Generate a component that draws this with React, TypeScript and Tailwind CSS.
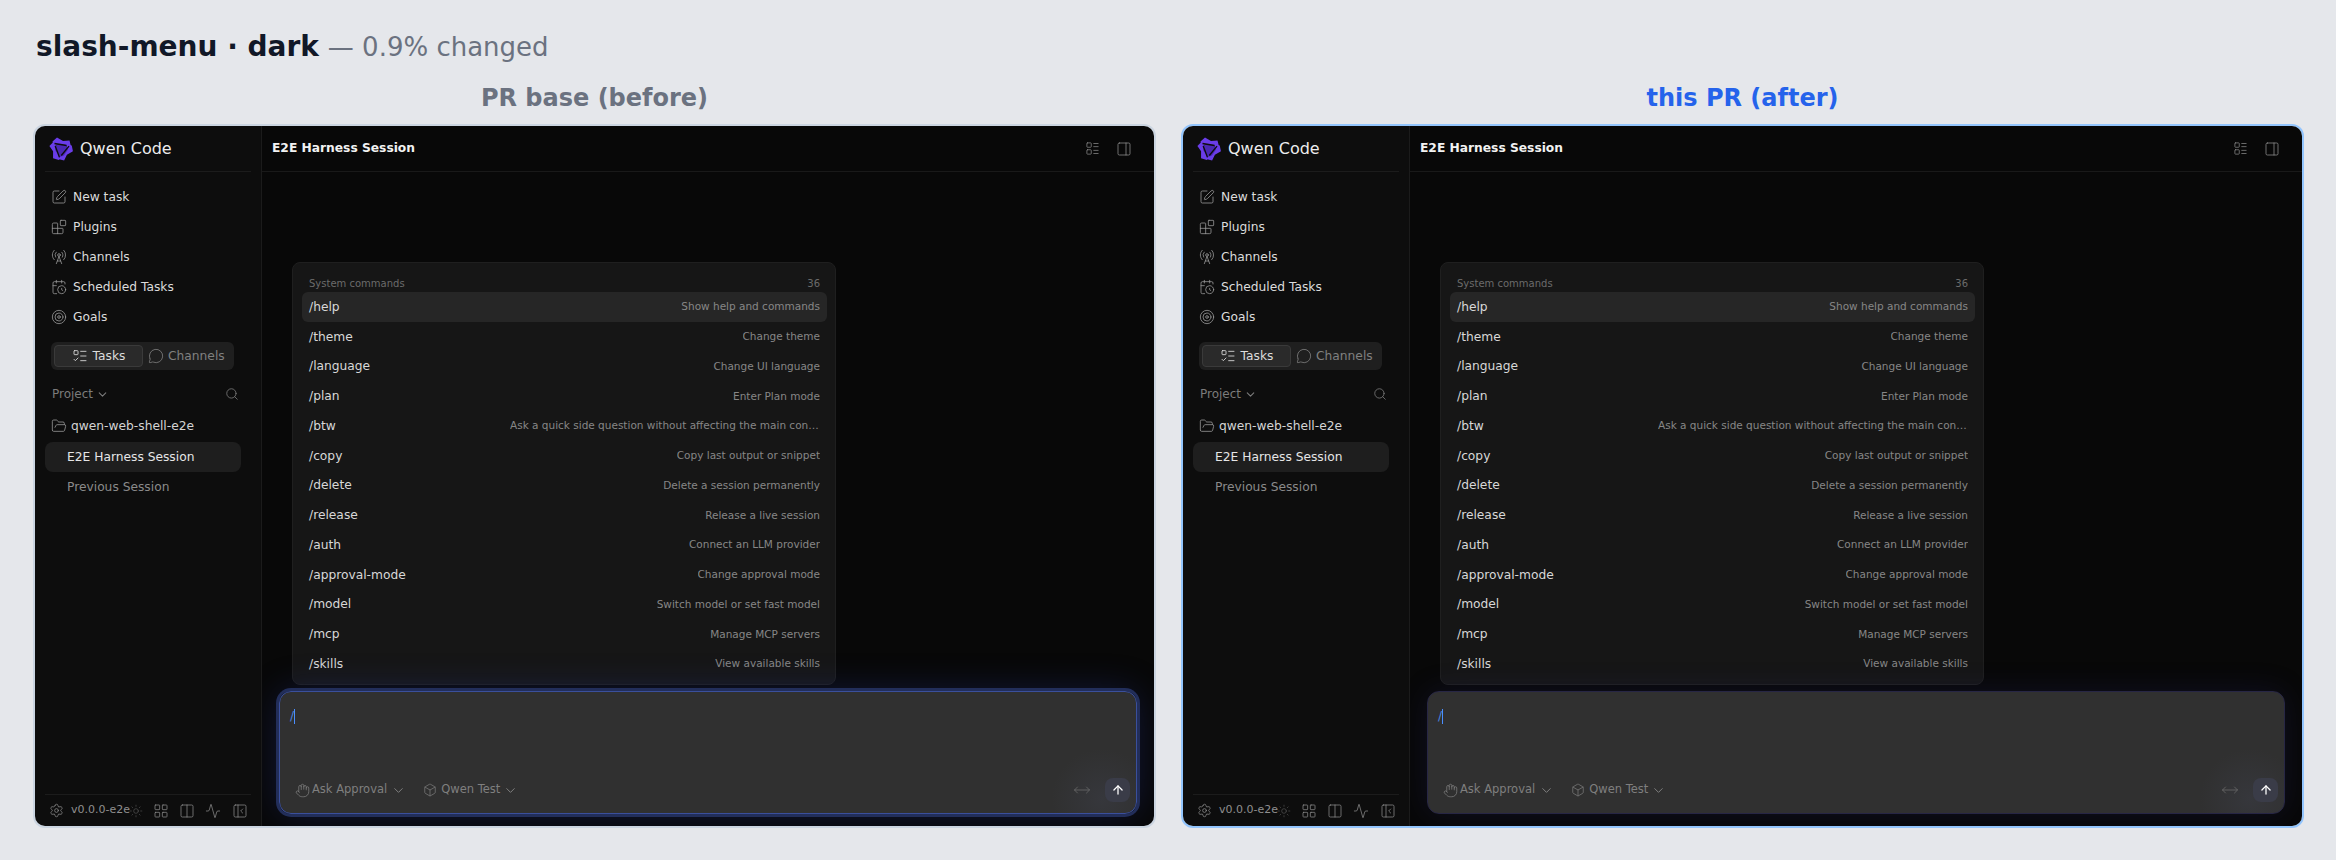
import React from 'react';
import {
  Activity,
  ArrowUp,
  Blocks,
  Box,
  CalendarClock,
  ChevronDown,
  Columns2,
  FolderOpen,
  Hand,
  LayoutGrid,
  LayoutList,
  ListTodo,
  MessageCircle,
  MoveHorizontal,
  PanelLeftClose,
  PanelRight,
  RadioTower,
  Search,
  Settings,
  SquarePen,
  Sun,
  Target,
} from 'lucide-react';

const NAV_ITEMS = [
  { label: 'New task', Icon: SquarePen },
  { label: 'Plugins', Icon: Blocks },
  { label: 'Channels', Icon: RadioTower },
  { label: 'Scheduled Tasks', Icon: CalendarClock },
  { label: 'Goals', Icon: Target },
];

const COMMANDS = [
  ['/help', 'Show help and commands'],
  ['/theme', 'Change theme'],
  ['/language', 'Change UI language'],
  ['/plan', 'Enter Plan mode'],
  ['/btw', 'Ask a quick side question without affecting the main conversation'],
  ['/copy', 'Copy last output or snippet'],
  ['/delete', 'Delete a session permanently'],
  ['/release', 'Release a live session'],
  ['/auth', 'Connect an LLM provider'],
  ['/approval-mode', 'Change approval mode'],
  ['/model', 'Switch model or set fast model'],
  ['/mcp', 'Manage MCP servers'],
  ['/skills', 'View available skills'],
];

function Logo() {
  return (
    <svg viewBox="0 0 24 24" className="h-[24px] w-[24px] shrink-0">
      {[0, 120, 240].map((angle) => (
        <path
          key={angle}
          transform={`rotate(${angle} 12 12)`}
          d="M8 .5 14 4l6.5-.5L22 9.5 17 8 8 7.5 5 10 3.5 4.5z"
          fill="#6a3de8"
        />
      ))}
      <path d="M7.5 7.5 17 8l2 4.5-4 6-4 1.5L6 13z" fill="#4a28b4" />
      {[0, 120, 240].map((angle) => (
        <path
          key={angle}
          transform={`rotate(${angle} 12 12)`}
          d="M5.5 6.5 17.5 8.5"
          stroke="#0d0d0d"
          strokeWidth="1.4"
          fill="none"
        />
      ))}
    </svg>
  );
}

function Sidebar() {
  return (
    <div className="flex h-full w-[227px] shrink-0 flex-col border-r border-[#1b1b1b] bg-[#0d0d0d]">
      <div className="mx-[10px] flex h-[46px] shrink-0 items-center gap-[7px] border-b border-[#1c1c1c] pl-[4px]">
        <Logo />
        <span className="text-[16px] text-[#ececec]">Qwen Code</span>
      </div>
      <div className="mt-[10px] flex flex-col pl-[16px]">
        {NAV_ITEMS.map(({ label, Icon }) => (
          <div key={label} className="flex h-[30px] items-center gap-[6px] text-[12.25px] text-[#dcdcdc]">
            <Icon size={16} strokeWidth={1.2} className="shrink-0 text-[#999999]" />
            {label}
          </div>
        ))}
      </div>
      <div className="mt-[10px] ml-[16px] flex h-[28px] w-[183px] items-center rounded-[6px] bg-[#1f1f1f] px-[3px] text-[12.25px]">
        <div className="flex h-[22px] w-[89px] items-center justify-center gap-[5px] rounded-[4px] border border-[#3a3a3a] bg-[#2a2a2a] text-[#dddddd]">
          <ListTodo size={16} strokeWidth={1.3} />
          Tasks
        </div>
        <div className="ml-[5px] flex items-center gap-[4px] text-[#808080]">
          <MessageCircle size={16} strokeWidth={1.2} />
          Channels
        </div>
      </div>
      <div className="mt-[14px] flex h-[20px] items-center pl-[17px] pr-[22px] text-[12px] text-[#7b7b7b]">
        Project
        <ChevronDown size={13} className="ml-[3px]" />
        <Search size={14} strokeWidth={1.4} className="ml-auto" />
      </div>
      <div className="mt-[12px] flex h-[20px] items-center gap-[4px] pl-[16px] text-[12.25px] text-[#d4d4d4]">
        <FolderOpen size={16} strokeWidth={1.2} className="text-[#999999]" />
        qwen-web-shell-e2e
      </div>
      <div className="mt-[6px] ml-[10px] flex h-[30px] w-[196px] items-center rounded-[8px] bg-[#1e1e1e] pl-[22px] text-[12.25px] text-[#e6e6e6]">
        E2E Harness Session
      </div>
      <div className="ml-[10px] flex h-[30px] items-center pl-[22px] text-[12.25px] text-[#8a8a8a]">
        Previous Session
      </div>
      <div className="mx-[10px] mt-auto flex h-[32px] items-center border-t border-[#1c1c1c] pl-[3.5px] text-[#8f8f8f]">
        <Settings size={15} strokeWidth={1.2} className="shrink-0" />
        <span className="ml-[7.5px] shrink-0 text-[11px]">v0.0.0-e2e</span>
        <Sun size={14} strokeWidth={0.9} className="-ml-[1.5px] shrink-0 text-[#666666]" />
        <LayoutGrid size={16} strokeWidth={1.1} className="ml-[10.5px] shrink-0" />
        <Columns2 size={16} strokeWidth={1.1} className="ml-[10px] shrink-0" />
        <Activity size={16} strokeWidth={1.1} className="ml-[10px] shrink-0" />
        <PanelLeftClose size={16} strokeWidth={1.1} className="ml-[11px] shrink-0" />
      </div>
    </div>
  );
}

function SlashMenu() {
  return (
    <div className="ml-[30px] w-[544px] rounded-[8px] border border-[#1f1f1f] bg-[#161616] pb-[5px] pt-[13px]">
      <div className="flex h-[14px] items-center justify-between pl-[16px] pr-[15px] text-[10px] text-[#6b6b6b]">
        <span>System commands</span>
        <span>36</span>
      </div>
      <div className="mt-[2px] flex flex-col pl-[9px] pr-[8px]">
        {COMMANDS.map(([name, desc], i) => (
          <div
            key={name}
            className={
              i === 0
                ? 'flex h-[29.75px] items-center justify-between gap-[16px] rounded-[6px] bg-[#262626] px-[7px]'
                : 'flex h-[29.75px] items-center justify-between gap-[16px] px-[7px]'
            }>
            <span className="shrink-0 text-[12.25px] text-[#d8d8d8]">{name}</span>
            <span className="max-w-[310px] truncate text-[10.5px] text-[#868686]">{desc}</span>
          </div>
        ))}
      </div>
    </div>
  );
}

function Composer({ focused }: { focused: boolean }) {
  return (
    <div
      className={
        focused
          ? 'mx-[17px] mb-[12px] mt-[6px] flex h-[123px] flex-col rounded-[12px] border border-[#3a4f9c] bg-[radial-gradient(circle_at_96%_88%,#36373c_0,#303030_50px)] shadow-[0_0_0_3px_#222e5a,0_0_36px_rgba(40,60,170,0.3)]'
          : 'mx-[17px] mb-[12px] mt-[6px] flex h-[123px] flex-col rounded-[12px] border border-[#272645] bg-[radial-gradient(circle_at_96%_88%,#36373c_0,#303030_50px)] shadow-[0_0_30px_rgba(50,50,150,0.18)]'
      }>
      <div className="mt-[14px] ml-[10px] flex h-[20px] items-center text-[12.25px] text-[#4a86e0]">
        /<span className="h-[15px] w-[1px] bg-[#4a8eff]" />
      </div>
      <div className="mt-auto mb-[11px] flex h-[24px] items-center pl-[15px] pr-[6px] text-[11.5px] text-[#7f7f7f]">
        <Hand size={15} strokeWidth={1.2} className="shrink-0" />
        <span className="ml-[2px]">Ask Approval</span>
        <ChevronDown size={15} strokeWidth={1.6} className="ml-[3.5px]" />
        <Box size={14} strokeWidth={1.2} className="ml-[17px]" />
        <span className="ml-[4.5px]">Qwen Test</span>
        <ChevronDown size={15} strokeWidth={1.6} className="ml-[2.5px]" />
        <MoveHorizontal size={18} strokeWidth={1} className="ml-auto text-[#6e6e6e]" />
        <div className="ml-[14px] flex h-[24px] w-[25px] items-center justify-center rounded-[8px] bg-[#3a3c48] text-white">
          <ArrowUp size={14} strokeWidth={2.2} />
        </div>
      </div>
    </div>
  );
}

function AppFrame({ after }: { after: boolean }) {
  return (
    <div
      className={
        after
          ? 'flex h-[704px] w-[1123px] overflow-hidden rounded-[12px] border-2 border-[#93c5fd]'
          : 'flex h-[704px] w-[1123px] overflow-hidden rounded-[12px] border-2 border-[#cbd5e1]'
      }>
      <Sidebar />
      <div className="flex min-w-0 flex-1 flex-col overflow-hidden bg-[#080808]">
        <div className="flex h-[46px] shrink-0 items-center border-b border-[#191919] pl-[10px] pr-[22px]">
          <span className="text-[12.25px] font-bold text-[#f2f2f2]">E2E Harness Session</span>
          <LayoutList size={15} strokeWidth={1.2} className="ml-auto text-[#8a8a8a]" />
          <PanelRight size={16} strokeWidth={1.2} className="ml-[16px] text-[#8a8a8a]" />
        </div>
        <div className="flex min-h-0 flex-1 flex-col justify-end">
          <SlashMenu />
          <Composer focused={!after} />
        </div>
      </div>
    </div>
  );
}

export default function App() {
  return (
    <div className="h-[860px] w-[2336px] overflow-hidden bg-[#e5e7eb] font-['DejaVu_Sans',sans-serif]">
      <h1 className="h-[65px] pl-[36px] pt-[29px] text-[28px] leading-[36px] text-[#6b7280]">
        <span className="font-bold text-[#111827]">slash-menu · dark</span>{' '}
        <span className="text-[26px]">— 0.9% changed</span>
      </h1>
      <div className="mt-[18px] flex gap-[25px] pl-[33px]">
        <div className="w-[1123px]">
          <div className="mb-[11px] text-center text-[24px] font-bold leading-[30px] text-[#6b7280]">
            PR base (before)
          </div>
          <AppFrame after={false} />
        </div>
        <div className="w-[1123px]">
          <div className="mb-[11px] text-center text-[24px] font-bold leading-[30px] text-[#2563eb]">
            this PR (after)
          </div>
          <AppFrame after />
        </div>
      </div>
    </div>
  );
}
